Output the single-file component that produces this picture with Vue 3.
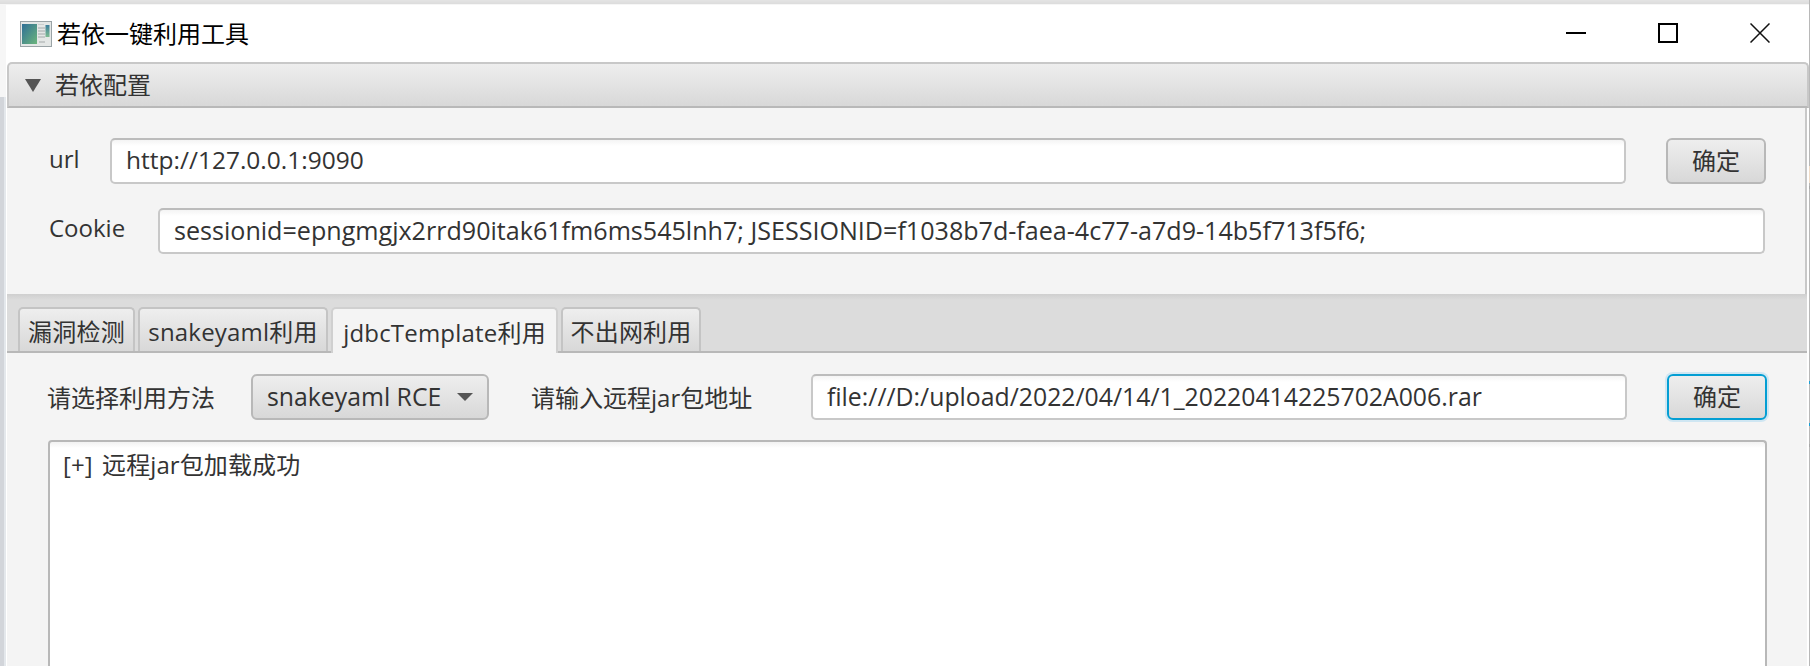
<template>
  <div class="desktop">
    <div class="edge-left"></div>
    <div class="edge-right">
      <i class="bit beige"></i>
      <i class="bit grey g1"></i>
      <i class="bit blue b1"></i>
      <i class="bit blue b2"></i>
      <i class="bit grey g2"></i>
    </div>
    <div class="window">
      <div class="titlebar">
        <svg class="app-icon" width="32" height="26" viewBox="0 0 32 26">
          <defs>
            <linearGradient id="pic" x1="0" y1="0" x2="1" y2="1">
              <stop offset="0" stop-color="#2f6f96" />
              <stop offset="1" stop-color="#6cb57c" />
            </linearGradient>
            <linearGradient id="bar" x1="0" y1="0" x2="0" y2="1">
              <stop offset="0" stop-color="#3d7f9c" />
              <stop offset="1" stop-color="#7dbb90" />
            </linearGradient>
          </defs>
          <rect x="0.5" y="0.5" width="31" height="25" fill="#e4e7e6" stroke="#9aa3a6" />
          <rect x="2" y="3" width="15" height="20" fill="url(#pic)" />
          <path d="M18 7h7M18 10h7M18 13h7M18 16h7M19 21h6" stroke="#b9bfbf" stroke-width="1.4" />
          <path d="M18 3.500h6" stroke="#c9cdcd" stroke-width="1" />
          <rect x="25.500" y="4" width="4" height="12" fill="url(#bar)" />
        </svg>
        <span class="title-text">若依一键利用工具</span>
        <div class="win-controls">
          <svg width="20" height="20" viewBox="0 0 20 20"><path d="M0 10h20" stroke="#000" stroke-width="2" /></svg>
          <svg width="20" height="20" viewBox="0 0 20 20"><rect x="1" y="1" width="18" height="18" fill="none" stroke="#000" stroke-width="2" /></svg>
          <svg width="20" height="20" viewBox="0 0 20 20"><path d="M0.500 0.500l19 19M19.500 0.500l-19 19" stroke="#111" stroke-width="1.500" /></svg>
        </div>
      </div>

      <div class="panel-head">
        <span class="arrow"></span>
        <span class="head-text">若依配置</span>
      </div>
      <div class="panel-body">
        <div class="form-row url-row">
          <label class="url-label">url</label>
          <div class="field url-field">http://127.0.0.1:9090</div>
          <button class="btn">确定</button>
        </div>
        <div class="form-row cookie-row">
          <label class="cookie-label">Cookie</label>
          <div class="field cookie-field">sessionid=epngmgjx2rrd90itak61fm6ms545lnh7; JSESSIONID=f1038b7d-faea-4c77-a7d9-14b5f713f5f6;</div>
        </div>
      </div>

      <div class="tab-bar">
        <div
          v-for="t in tabs"
          :key="t.name"
          class="tab"
          :class="{ active: t.name === current }"
          :style="{ width: t.w + 'px' }"
        >{{ t.name }}</div>
      </div>

      <div class="tab-body">
        <div class="form-row exploit-row">
          <label class="method-label">请选择利用方法</label>
          <div class="select">
            <span>snakeyaml RCE</span>
            <span class="caret"></span>
          </div>
          <label class="jar-label">请输入远程jar包地址</label>
          <div class="field jar-field">file:///D:/upload/2022/04/14/1_20220414225702A006.rar</div>
          <button class="btn focused">确定</button>
        </div>
        <div class="output">[+] 远程jar包加载成功</div>
      </div>
    </div>
  </div>
</template>

<script setup>
const current = 'jdbcTemplate利用'
const tabs = [
  { name: '漏洞检测', w: 117 },
  { name: 'snakeyaml利用', w: 190 },
  { name: 'jdbcTemplate利用', w: 227 },
  { name: '不出网利用', w: 140 }
]
</script>

<style>
html,
body {
  margin: 0;
  background: #fff;
}
</style>

<style scoped>
.desktop {
  position: relative;
  width: 1810px;
  height: 666px;
  overflow: hidden;
  box-sizing: border-box;
  padding: 5px 1px 0 6px;
  background: linear-gradient(to bottom, #e4e4e4 0, #dcdcdc 4px, #f6f6f6 4px);
  font-family: "Open Sans", "Noto Sans CJK SC", sans-serif;
  font-size: 24px;
  color: #333;
}

.edge-left {
  position: absolute;
  left: 0;
  top: 97px;
  bottom: 0;
  width: 7px;
  background: linear-gradient(to right, #d2d5da 0, #d2d5da 4px, #e4e8ec 4px);
}

.edge-right {
  position: absolute;
  right: 0;
  top: 0;
  bottom: 0;
  width: 1px;
  background: #b8b8b8;
}

.bit {
  position: absolute;
  right: 0;
  width: 3px;
  display: block;
}

.beige {
  top: 166px;
  height: 17px;
  background: #f0dcc8;
}

.grey {
  height: 3px;
  background: #a8a8a8;
}

.g1 {
  top: 186px;
}

.g2 {
  top: 444px;
}

.blue {
  height: 3px;
  background: #1a9fd6;
}

.b1 {
  top: 381px;
}

.b2 {
  top: 423px;
}

.window {
  position: relative;
  height: 661px;
  background: #fff;
}

.titlebar {
  height: 57px;
  display: flex;
  align-items: center;
  padding-left: 14px;
  color: #000;
}

.title-text {
  padding-bottom: 2px;
}

.app-icon {
  margin-right: 5px;
}

.win-controls {
  margin-left: auto;
  display: flex;
  gap: 72px;
  margin-right: 39px;
  margin-bottom: 1px;
}

.panel-head {
  height: 46px;
  box-sizing: border-box;
  margin-left: 1px;
  border: 2px solid #c8c8c8;
  border-bottom: 2px solid #b8b8b8;
  border-radius: 5px 5px 0 0;
  background: linear-gradient(to bottom, #eeeeee, #d8d8d8);
  display: flex;
  align-items: center;
  padding-left: 16px;
  gap: 14px;
}

.head-text {
  padding-bottom: 3px;
}

.arrow {
  width: 0;
  height: 0;
  border-left: 8px solid transparent;
  border-right: 8px solid transparent;
  border-top: 13px solid #555;
}

.panel-body {
  height: 186px;
  margin-left: 1px;
  margin-right: 2px;
  background: #f4f4f4;
  box-sizing: border-box;
  border-right: 2px solid #c8c8c8;
  padding: 30px 0 0;
}

.form-row {
  display: flex;
  align-items: center;
}

.field {
  box-sizing: border-box;
  height: 46px;
  border: 2px solid #c8c8c8;
  border-top-color: #bcbcbc;
  border-radius: 5px;
  background: linear-gradient(to bottom, #f4f4f4 0, #fff 6px);
  display: flex;
  align-items: center;
  padding: 0 0 3px 14px;
  white-space: nowrap;
  overflow: hidden;
  font-size: 24.8px;
}

.url-label {
  width: 61px;
  padding-left: 42px;
  position: relative;
  top: -3px;
}

.url-field {
  width: 1516px;
  font-size: 24.5px;
}

.btn {
  box-sizing: border-box;
  width: 100px;
  height: 46px;
  margin-left: 40px;
  border: 2px solid #b8b8b8;
  border-radius: 6px;
  background: linear-gradient(to bottom, #eeeeee, #d8d8d8);
  font: inherit;
  color: #333;
  padding: 0 0 3px;
}

.cookie-row {
  margin-top: 24px;
}

.cookie-label {
  width: 109px;
  padding-left: 42px;
  position: relative;
  top: -4px;
}

.cookie-field {
  width: 1607px;
  font-size: 25.1px;
}

.tab-bar {
  height: 59px;
  box-sizing: border-box;
  margin-left: 1px;
  margin-right: 2px;
  padding: 13px 0 0 11px;
  background: linear-gradient(to bottom, #cfcfcf 0, #dcdcdc 6px);
  border-bottom: 2px solid #b8b8b8;
  display: flex;
  gap: 3px;
}

.tab {
  box-sizing: border-box;
  height: 44px;
  border: 2px solid #c4c4c4;
  border-bottom: none;
  border-radius: 5px 5px 0 0;
  background: linear-gradient(to bottom, #eeeeee, #d8d8d8);
  display: flex;
  align-items: center;
  justify-content: center;
  white-space: nowrap;
  letter-spacing: 0.2px;
}

.tab.active {
  height: 46px;
  background: #f4f4f4;
  position: relative;
  z-index: 1;
  border-color: #d0d0d0;
}

.tab-body {
  margin-left: 1px;
  margin-right: 2px;
  height: 320px;
  background: #f4f4f4;
  box-sizing: border-box;
  padding: 21px 0 0 40px;
}

.method-label {
  width: 204px;
  padding-bottom: 2px;
}

.select {
  box-sizing: border-box;
  width: 238px;
  height: 46px;
  border: 2px solid #b8b8b8;
  border-radius: 6px;
  background: linear-gradient(to bottom, #eeeeee, #d8d8d8);
  display: flex;
  align-items: center;
  padding: 0 0 3px 14px;
  white-space: nowrap;
  font-size: 24.8px;
}

.caret {
  margin-left: auto;
  margin-right: 14px;
  margin-top: 3px;
  width: 0;
  height: 0;
  border-left: 8px solid transparent;
  border-right: 8px solid transparent;
  border-top: 8px solid #555;
}

.jar-label {
  width: 279px;
  padding: 0 0 2px 42px;
  box-sizing: content-box;
  margin-right: 1px;
}

.jar-field {
  width: 816px;
}

.focused {
  border-color: #039ed3;
  box-shadow: 0 0 0 2px #cfe6f2;
}

.output {
  box-sizing: border-box;
  width: 1719px;
  height: 300px;
  margin-top: 20px;
  margin-left: 1px;
  border: 2px solid #b8b8b8;
  border-bottom: none;
  border-radius: 4px 4px 0 0;
  background: linear-gradient(to bottom, #f2f2f2 0, #fff 6px);
  padding: 4px 13px;
  word-spacing: 3px;
  letter-spacing: 0.1px;
}
</style>
